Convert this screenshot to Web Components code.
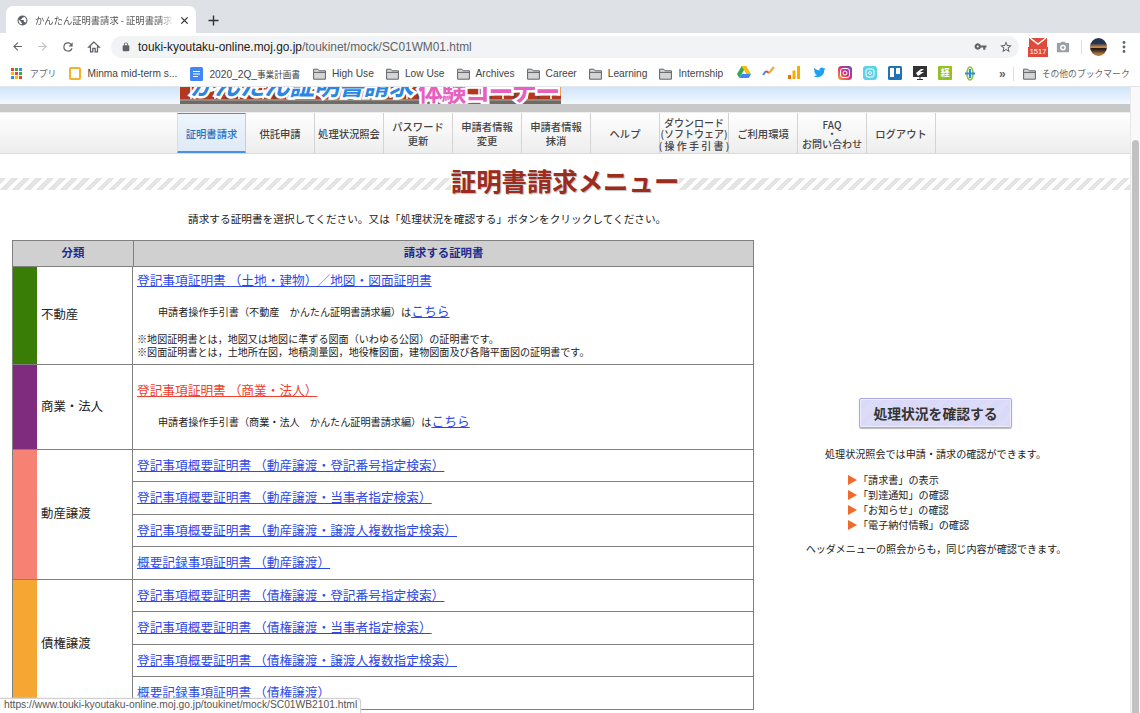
<!DOCTYPE html>
<html lang="ja">
<head>
<meta charset="utf-8">
<title>かんたん証明書請求 - 証明書請求メニュー</title>
<style>
html, body { margin: 0; height: 713px; overflow: hidden; background: #fff; }
body { position: relative; width: 1140px; font-family: "Noto Sans CJK JP", "Liberation Sans", sans-serif; color: #222; }
#view { display: flex; height: 626px; }
#page { width: 1130px; overflow: hidden; }
</style>
</head>
<body>
<browser-chrome></browser-chrome>
<div id="view">
  <div id="page">
    <site-banner></site-banner>
    <site-nav>
      <nav-item active>証明書請求</nav-item>
      <nav-item>供託申請</nav-item>
      <nav-item>処理状況照会</nav-item>
      <nav-item>パスワード<br>更新</nav-item>
      <nav-item>申請者情報<br>変更</nav-item>
      <nav-item>申請者情報<br>抹消</nav-item>
      <nav-item>ヘルプ</nav-item>
      <nav-item tight>ダウンロード<br>(ソフトウェア)<br>( 操 作 手 引 書 )</nav-item>
      <nav-item>ご利用環境</nav-item>
      <nav-item faq>FAQ<br>・<br>お問い合わせ</nav-item>
      <nav-item>ログアウト</nav-item>
    </site-nav>
    <page-title>証明書請求メニュー</page-title>
    <intro-text>請求する証明書を選択してください。又は「処理状況を確認する」ボタンをクリックしてください。</intro-text>
    <menu-layout>
      <cert-table>
        <cert-group color="#3a7d06" label="不動産" height="98">
          <cert-row height="98">
            <cert-link big>登記事項証明書 （土地・建物）／地図・図面証明書</cert-link>
            <guide-line>申請者操作手引書（不動産　かんたん証明書請求編）は</guide-line>
            <cert-note>※地図証明書とは，地図又は地図に準ずる図面（いわゆる公図）の証明書です。<br>※図面証明書とは，土地所在図，地積測量図，地役権図面，建物図面及び各階平面図の証明書です。</cert-note>
          </cert-row>
        </cert-group>
        <cert-group color="#7f2c7f" label="商業・法人" height="85">
          <cert-row height="85" pad="15">
            <cert-link red>登記事項証明書 （商業・法人）</cert-link>
            <guide-line wide>申請者操作手引書（商業・法人　かんたん証明書請求編）は</guide-line>
          </cert-row>
        </cert-group>
        <cert-group color="#f58272" label="動産譲渡" height="130">
          <cert-row><cert-link>登記事項概要証明書 （動産譲渡・登記番号指定検索）</cert-link></cert-row>
          <cert-row><cert-link>登記事項概要証明書 （動産譲渡・当事者指定検索）</cert-link></cert-row>
          <cert-row><cert-link>登記事項概要証明書 （動産譲渡・譲渡人複数指定検索）</cert-link></cert-row>
          <cert-row><cert-link>概要記録事項証明書 （動産譲渡）</cert-link></cert-row>
        </cert-group>
        <cert-group color="#f6a632" label="債権譲渡" height="130">
          <cert-row><cert-link>登記事項概要証明書 （債権譲渡・登記番号指定検索）</cert-link></cert-row>
          <cert-row><cert-link>登記事項概要証明書 （債権譲渡・当事者指定検索）</cert-link></cert-row>
          <cert-row><cert-link>登記事項概要証明書 （債権譲渡・譲渡人複数指定検索）</cert-link></cert-row>
          <cert-row><cert-link>概要記録事項証明書 （債権譲渡）</cert-link></cert-row>
        </cert-group>
      </cert-table>
      <status-panel></status-panel>
    </menu-layout>
  </div>
  <page-scrollbar></page-scrollbar>
</div>
<status-bubble>https://www.touki-kyoutaku-online.moj.go.jp/toukinet/mock/SC01WB2101.html</status-bubble>

<script>
// small helper, every element has open shadow root with own style
function shadow(el, html) {
    const template = document.createElement("template")
    template.innerHTML = html
    el.attachShadow({ mode: "open" }).appendChild(template.content.cloneNode(true))
}

const FOLDER = `<svg width="13" height="12" viewBox="0 0 13 12"><path d="M.6 1.2h4.2l1.3 1.6h6.3v8.4H.6z" fill="#d5d5d5" stroke="#5f6368" stroke-width="1"/><path d="M.6 4.4h11.8" stroke="#5f6368" stroke-width="1"/></svg>`

class BrowserChrome extends HTMLElement {
    constructor() {
        super()
        const folder = name => `<span class="bm f"><span class="ic">${FOLDER}</span>${name}</span>`
        shadow(this, `
        <style>
        :host { display: block; height: 87px; font-family: "Liberation Sans", "Noto Sans CJK JP", sans-serif; background: #fff; }
        .tabs { height: 33px; background: #dee1e6; display: flex; align-items: flex-end; padding-left: 6px; box-sizing: border-box; }
        .tab { width: 190px; height: 27px; background: #fff; border-radius: 7px 7px 0 0; display: flex; align-items: center; padding: 1px 7px 0 11px; box-sizing: border-box; color: #555; font-size: 9.3px; gap: 7px; }
        .tab .t { flex: 1; overflow: hidden; white-space: nowrap; -webkit-mask-image: linear-gradient(90deg,#000 90%,transparent); mask-image: linear-gradient(90deg,#000 90%,transparent); font-family: "Noto Sans CJK JP", sans-serif; }
        .plus { margin: 0 0 2px 12px; height: 21px; display: flex; align-items: center; }
        .tool { height: 27px; display: flex; align-items: center; padding-left: 4px; box-sizing: border-box; }
        .nav { width: 26px; display: flex; justify-content: center; margin-right: -.5px; }
        .omni { margin-left: 5px; width: 908px; height: 22px; border-radius: 11px; background: #f1f3f4; display: flex; align-items: center; padding: 0 6px 0 10px; box-sizing: border-box; font-size: 11.9px; color: #5f6368; }
        .omni b { font-weight: 400; color: #222; }
        .url { flex: 1; margin-left: 7px; white-space: nowrap; }
        .omni svg + svg { margin-left: 12px; }
        .right { display: flex; align-items: center; margin-left: 9px; }
        .sep { width: 1px; height: 14px; background: #dadce0; margin: 0 8px 0 11px; }
        .avatar { width: 17px; height: 18px; border-radius: 50%; background: linear-gradient(#27344e 0 30%, #7d6a58 42%, #e8963a 52%, #2a1a12 58%, #3a2a22 68%, #b0753c 88%); }
        .mail { position: relative; width: 20px; height: 20px; }
        .mail span { position: absolute; left: 0; bottom: 0; width: 20px; height: 10px; background: #e04a3c; color: #fff; font-size: 7.5px; line-height: 10px; text-align: center; }
        .bars { height: 27px; display: flex; align-items: center; padding-left: 11px; font-size: 10.2px; color: #444; white-space: nowrap; box-shadow: inset 0 -1px 0 #e4e6ea; box-sizing: border-box; }
        .bm { display: flex; align-items: center; margin-right: 13px; }
        .bm.f { margin-right: 12px; }
        .ic { display: flex; margin-right: 6px; }
        .cjk { font-family: "Noto Sans CJK JP", sans-serif; font-size: 8.8px; color: #666; }
        .ja { font-family: "Noto Sans CJK JP", sans-serif; font-size: 8.6px; }
        .fav { display: flex; width: 25.2px; justify-content: center; }
        .favs { display: flex; margin-left: 8px; }
        .more { margin-left: 16px; font-size: 12px; color: #666; font-weight: 700; }
        .vsep { width: 1px; height: 14px; background: #dadce0; margin: 0 9px 0 7px; }
        </style>
        <div class="tabs">
          <div class="tab">
            <svg width="11" height="11" viewBox="0 0 24 24"><path fill="#5f6368" d="M12 1a11 11 0 1 0 0 22 11 11 0 0 0 0-22zM3.5 12c0-.8.1-1.5.3-2.2L9 15v1c0 1.1.9 2 2 2v2.4A8.5 8.5 0 0 1 3.5 12zm14.6 4.7c-.3-.8-1-1.7-2.1-1.7h-1v-3c0-.6-.4-1-1-1H8v-2h2c.6 0 1-.4 1-1V6h2c1.1 0 2-.9 2-2 3.2 1.2 5.5 4.4 5.5 8 0 1.8-1 3.6-2.4 4.7z"/></svg>
            <span class="t">かんたん証明書請求 - 証明書請求メニュー</span>
            <svg width="9" height="9" viewBox="0 0 10 10"><path d="M1.5 1.5l7 7m0-7l-7 7" stroke="#333" stroke-width="1.4"/></svg>
          </div>
          <div class="plus"><svg width="11" height="11" viewBox="0 0 11 11"><path d="M5.5 .5v10M.5 5.5h10" stroke="#333" stroke-width="1.4"/></svg></div>
        </div>
        <div class="tool">
          <span class="nav"><svg width="13" height="13" viewBox="0 0 24 24"><path fill="#5f6368" d="M20 11H7.83l5.59-5.59L12 4l-8 8 8 8 1.41-1.41L7.83 13H20z"/></svg></span>
          <span class="nav"><svg width="13" height="13" viewBox="0 0 24 24"><path fill="#bdc1c6" d="M4 11h12.17l-5.59-5.59L12 4l8 8-8 8-1.41-1.41L16.17 13H4z"/></svg></span>
          <span class="nav"><svg width="14" height="14" viewBox="0 0 24 24"><path fill="#5f6368" d="M17.65 6.35A7.96 7.96 0 0 0 12 4a8 8 0 1 0 7.73 10h-2.08A6 6 0 1 1 12 6c1.66 0 3.14.69 4.22 1.78L13 11h7V4z"/></svg></span>
          <span class="nav"><svg width="14" height="14" viewBox="0 0 24 24"><path fill="none" stroke="#5f6368" stroke-width="2.2" d="M12 3.5L3 12h3v8.5h4v-6h4v6h4V12h3z"/></svg></span>
          <div class="omni">
            <svg width="10" height="10" viewBox="0 0 24 24"><path fill="#5f6368" d="M18 8h-1V6a5 5 0 0 0-10 0v2H6a2 2 0 0 0-2 2v10a2 2 0 0 0 2 2h12a2 2 0 0 0 2-2V10a2 2 0 0 0-2-2zM9 6a3 3 0 0 1 6 0v2H9z"/></svg>
            <span class="url"><b>touki-kyoutaku-online.moj.go.jp</b>/toukinet/mock/SC01WM01.html</span>
            <svg width="13" height="13" viewBox="0 0 24 24"><path fill="#5f6368" d="M12.65 10A6 6 0 1 0 12.65 14H17v4h4v-4h2v-4zM7 14a2 2 0 1 1 0-4 2 2 0 0 1 0 4z"/></svg>
            <svg width="14" height="14" viewBox="0 0 24 24"><path fill="#5f6368" d="M22 9.24l-7.19-.62L12 2 9.19 8.63 2 9.24l5.46 4.73L5.82 21 12 17.27 18.18 21l-1.63-7.03zM12 15.4l-3.76 2.27 1-4.28-3.32-2.88 4.38-.38L12 6.1l1.71 4.04 4.38.38-3.32 2.88 1 4.28z"/></svg>
          </div>
          <div class="right">
            <div class="mail">
              <svg width="20" height="11" viewBox="0 0 20 11" style="position:absolute;left:0;top:0"><path fill="#e04a3c" d="M1 1h18v9H1z"/><path fill="none" stroke="#fff" stroke-width="1.5" d="M2 1l8 6 8-6"/></svg>
              <span>1517</span>
            </div>
            <svg style="margin-left:8px" width="14" height="14" viewBox="0 0 24 24"><path fill="#9aa0a6" d="M9 3L7.2 5H3a1.5 1.5 0 0 0-1.5 1.5v13A1.5 1.5 0 0 0 3 21h18a1.5 1.5 0 0 0 1.5-1.5v-13A1.5 1.5 0 0 0 21 5h-4.2L15 3zm3 15a5 5 0 1 1 0-10 5 5 0 0 1 0 10zm0-2.5a2.5 2.5 0 1 0 0-5 2.5 2.5 0 0 0 0 5z"/></svg>
            <span class="sep"></span>
            <span class="avatar"></span>
            <svg style="margin-left:15px" width="4" height="14" viewBox="0 0 4 14"><circle cx="2" cy="2.5" r="1.4" fill="#5f6368"/><circle cx="2" cy="7" r="1.4" fill="#5f6368"/><circle cx="2" cy="11.5" r="1.4" fill="#5f6368"/></svg>
          </div>
        </div>
        <div class="bars">
          <span class="bm"><span class="ic" style="margin-right:8px"><svg width="11" height="11" viewBox="0 0 11 11"><rect x="0" y="0" width="3" height="3" fill="#ea4335"/><rect x="4" y="0" width="3" height="3" fill="#34a853"/><rect x="8" y="0" width="3" height="3" fill="#4285f4"/><rect x="0" y="4" width="3" height="3" fill="#fbbc05"/><rect x="4" y="4" width="3" height="3" fill="#ea4335"/><rect x="8" y="4" width="3" height="3" fill="#34a853"/><rect x="0" y="8" width="3" height="3" fill="#4285f4"/><rect x="4" y="8" width="3" height="3" fill="#fbbc05"/><rect x="8" y="8" width="3" height="3" fill="#ea4335"/></svg></span><span class="cjk">アプリ</span></span>
          <span class="bm"><span class="ic"><svg width="12" height="13" viewBox="0 0 12 13"><rect x="1" y="1" width="10" height="11" rx="1" fill="#fff" stroke="#f6b02c" stroke-width="2"/></svg></span>Minma mid-term s...</span>
          <span class="bm"><span class="ic"><svg width="13" height="14" viewBox="0 0 13 14"><rect x="0" y="0" width="13" height="14" rx="1.5" fill="#4285f4"/><path d="M3 4.5h7M3 7h7M3 9.5h5" stroke="#fff" stroke-width="1"/></svg></span><span>2020_2Q_<span class="ja">事業計画書</span></span></span>
          ${folder("High Use")}${folder("Low Use")}${folder("Archives")}${folder("Career")}${folder("Learning")}
          <span class="bm" style="margin-right:0"><span class="ic">${FOLDER}</span>Internship</span>
          <span class="favs">
            <span class="fav"><svg width="14" height="12" viewBox="0 0 14 12"><path fill="#fbbc05" d="M4.7 0h4.6l4.7 8H9.3z"/><path fill="#34a853" d="M4.7 0L0 8l2.3 4 4.7-8z"/><path fill="#4285f4" d="M4.7 8H14l-2.3 4H2.3z"/></svg></span>
            <span class="fav"><svg width="13" height="10" viewBox="0 0 13 10"><path fill="none" stroke="#4285f4" stroke-width="2" d="M1 9l3-4"/><path fill="none" stroke="#ea4335" stroke-width="2" d="M4 5l3 2"/><path fill="none" stroke="#f6a632" stroke-width="2" d="M7 7l5-6"/></svg></span>
            <span class="fav"><svg width="12" height="13" viewBox="0 0 12 13"><rect x="0" y="9" width="3" height="4" fill="#e8710a"/><rect x="4.5" y="4.5" width="3" height="8.5" fill="#f9ab00"/><rect x="9" y="0" width="3" height="13" fill="#f9ab00"/></svg></span>
            <span class="fav"><svg width="13" height="13" viewBox="0 0 24 24"><path fill="#1da1f2" d="M23 4.9c-.8.4-1.7.6-2.6.7.9-.6 1.6-1.4 2-2.5-.9.5-1.9.9-2.9 1.1A4.5 4.5 0 0 0 11.8 8.3 12.8 12.8 0 0 1 2.5 3.6a4.5 4.5 0 0 0 1.4 6c-.7 0-1.4-.2-2-.6 0 2.2 1.5 4 3.6 4.5-.7.2-1.4.2-2 .1.6 1.8 2.2 3.1 4.2 3.1A9 9 0 0 1 1 18.6 12.8 12.8 0 0 0 20.7 7.2c.9-.6 1.7-1.4 2.3-2.3z"/></svg></span>
            <span class="fav"><svg width="14" height="14" viewBox="0 0 14 14"><defs><linearGradient id="ig" x1="0" y1="1" x2="1" y2="0"><stop offset="0" stop-color="#f9a825"/><stop offset=".5" stop-color="#d6307c"/><stop offset="1" stop-color="#5b4fd0"/></linearGradient></defs><rect width="14" height="14" rx="3.5" fill="url(#ig)"/><rect x="2.5" y="2.5" width="9" height="9" rx="2.5" fill="none" stroke="#fff"/><circle cx="7" cy="7" r="2" fill="none" stroke="#fff"/></svg></span>
            <span class="fav"><svg width="14" height="14" viewBox="0 0 14 14"><rect width="14" height="14" rx="3" fill="#5ad3e6"/><rect x="3" y="3" width="8" height="8" rx="2" fill="none" stroke="#fff"/><circle cx="7" cy="7" r="1.5" fill="none" stroke="#fff"/></svg></span>
            <span class="fav"><svg width="14" height="14" viewBox="0 0 14 14"><rect width="14" height="14" rx="1.5" fill="#1f74b8"/><rect x="2" y="2" width="4" height="9" fill="#fff"/><rect x="8" y="2" width="4" height="6" fill="#fff"/></svg></span>
            <span class="fav"><svg width="14" height="14" viewBox="0 0 14 14"><rect width="14" height="11" fill="#333"/><path d="M4 13.5h6M7 11v2.5" stroke="#333"/><path d="M3 7l5-4h3L7 6h4L5 10z" fill="#fff"/></svg></span>
            <span class="fav" style="position:relative"><svg width="14" height="14" viewBox="0 0 14 14"><rect width="14" height="14" rx="1" fill="#94c11f"/></svg><span style="position:absolute;left:0;right:0;top:1px;text-align:center;color:#fff;font:700 9px/12px 'Noto Sans CJK JP',sans-serif">経</span></span>
            <span class="fav"><svg width="12" height="15" viewBox="0 0 12 15"><ellipse cx="6" cy="7.5" rx="3" ry="6.5" fill="none" stroke="#8cc63f" stroke-width="1.6"/><path d="M6 3v9" stroke="#2b8de0" stroke-width="2"/><path d="M1 7.5h10" stroke="#2b8de0" stroke-width="2"/></svg></span>
          </span>
          <span class="more">»</span>
          <span class="vsep"></span>
          <span class="bm" style="margin:0"><span class="ic">${FOLDER}</span><span class="cjk">その他のブックマーク</span></span>
        </div>`)
    }
}
customElements.define("browser-chrome", BrowserChrome)

class SiteBanner extends HTMLElement {
    constructor() {
        super()
        shadow(this, `
        <style>
        :host { display: block; height: 26px; background: linear-gradient(#cfe4fb 0, #f2f8ff 17px, #c8c8c8 17px, #c8c8c8 25px, #eee 25px); }
        .art { margin-left: 180px; width: 381px; height: 17px; overflow: hidden; position: relative; display: flex; white-space: nowrap; font: 700 25px/30px "Noto Sans CJK JP", sans-serif;
            background:
              linear-gradient(transparent 12px, #8f8b84 12px 14px, #6e6a64 14px),
              repeating-linear-gradient(90deg, #b4371f 0 10px, #d9d4ca 10px 12px, #b4371f 12px 21px, #5b4a44 21px 24px); }
        .art span { paint-order: stroke; -webkit-text-stroke: 5px #fff; height: 30px; }
        .a { margin: -18px 0 0 10px; color: #2c85df; letter-spacing: -.2px; font-style: italic; }
        .b { margin: -12px 0 0 5px; color: #e85fc0; letter-spacing: -1.6px; }
        </style>
        <div class="art"><span class="a">かんたん証明書請求</span><span class="b">体験コーナー</span></div>`)
    }
}
customElements.define("site-banner", SiteBanner)

class SiteNav extends HTMLElement {
    constructor() {
        super()
        shadow(this, `
        <style>
        :host { display: flex; height: 40px; padding-left: 177px; background: linear-gradient(#fff, #ededed); border-bottom: 1px solid #dcdcdc; }
        </style>
        <slot></slot>`)
    }
}
customElements.define("site-nav", SiteNav)

class NavItem extends HTMLElement {
    constructor() {
        super()
        shadow(this, `
        <style>
        :host { display: flex; width: 69px; height: 40px; box-sizing: border-box; padding-top: 2px; align-items: center; justify-content: center; text-align: center; font-size: 10.3px; line-height: 14px; font-weight: 500; color: #444; white-space: nowrap; border-right: 1px solid #d4d4d4; }
        :host([tight]) { line-height: 11.5px; font-size: 10px; }
        :host([faq]) { line-height: 9.5px; font-size: 10px; }
        :host([active]) { color: #2a70c0; background: linear-gradient(#eef5fc, #dfeaf6); border-top: 1px solid #4a90e0; border-bottom: 2px solid #4a90e0; border-right-color: #ccc; border-left: 1px solid #ddd; }
        </style>
        <span><slot></slot></span>`)
    }
}
customElements.define("nav-item", NavItem)

class PageTitle extends HTMLElement {
    constructor() {
        super()
        shadow(this, `
        <style>
        :host { display: flex; justify-content: center; margin-top: 10px; height: 32px; align-items: center; }
        .band { flex: 1; height: 12px; margin-top: 8px; background: repeating-linear-gradient(-45deg, #e4e4e4 0 4.5px, #fff 4.5px 8.5px); }
        h1 { margin: 0; font-size: 25.4px; line-height: 32px; font-weight: 700; color: #9c2b20; white-space: nowrap; text-shadow: 1px 1px 1px #bbb; background: #fff; }
        </style>
        <div class="band"></div><h1><slot></slot></h1><div class="band"></div>`)
    }
}
customElements.define("page-title", PageTitle)

class IntroText extends HTMLElement {
    constructor() {
        super()
        shadow(this, `
        <style>
        :host { display: block; padding-left: 188px; height: 44px; box-sizing: border-box; padding-top: 15px; font-size: 10.67px; line-height: 16px; color: #222; white-space: nowrap; }
        </style>
        <slot></slot>`)
    }
}
customElements.define("intro-text", IntroText)

class MenuLayout extends HTMLElement {
    constructor() {
        super()
        shadow(this, `
        <style>
        :host { display: flex; padding-left: 12px; }
        </style>
        <slot></slot>`)
    }
}
customElements.define("menu-layout", MenuLayout)

class CertTable extends HTMLElement {
    constructor() {
        super()
        shadow(this, `
        <style>
        :host { display: block; width: 742px; flex: none; border: 1px solid #808080; border-bottom: none; box-sizing: border-box; }
        .head { display: flex; height: 25px; background: #d0d0d0; border-bottom: 1px solid #808080; font-size: 11.4px; font-weight: 700; color: #1d2c8f; text-align: center; line-height: 23px; }
        .a { width: 120px; border-right: 1px solid #808080; }
        .b { flex: 1; }
        </style>
        <div class="head"><div class="a">分類</div><div class="b">請求する証明書</div></div>
        <slot></slot>`)
    }
}
customElements.define("cert-table", CertTable)

class CertGroup extends HTMLElement {
    constructor() {
        super()
        shadow(this, `
        <style>
        :host { display: flex; box-sizing: border-box; border-bottom: 1px solid #808080; }
        .color { width: 24px; }
        .label { width: 96px; padding: 0 0 3px 4px; box-sizing: border-box; display: flex; align-items: center; font-size: 12.4px; color: #222; border-right: 1px solid #808080; }
        .rows { flex: 1; }
        </style>
        <div class="color"></div><div class="label"></div><div class="rows"><slot></slot></div>`)
        this.shadowRoot.querySelector(".color").style.background = this.getAttribute("color")
        this.shadowRoot.querySelector(".label").textContent = this.getAttribute("label")
        this.style.height = this.getAttribute("height") + "px"
    }
}
customElements.define("cert-group", CertGroup)

class CertRow extends HTMLElement {
    constructor() {
        super()
        shadow(this, `
        <style>
        :host { display: block; box-sizing: border-box; height: 32.25px; padding: 0 4px; border-bottom: 1px solid #808080; }
        :host(:last-child) { border-bottom: none; }
        </style>
        <slot></slot>`)
        const h = this.getAttribute("height")
        if (h) this.style.height = h + "px"
        const pad = this.getAttribute("pad")
        if (pad) this.style.paddingTop = pad + "px"
    }
}
customElements.define("cert-row", CertRow)

class CertLink extends HTMLElement {
    constructor() {
        super()
        shadow(this, `
        <style>
        :host { display: block; font-size: 12.7px; line-height: 29px; white-space: nowrap; }
        :host([big]) { line-height: 26px; }
        a { color: #2f49e8; text-decoration: underline; }
        :host([red]) a { color: #f0402e; }
        :host([red]) { line-height: 20px; }
        </style>
        <a href="#"><slot></slot></a>`)
    }
}
customElements.define("cert-link", CertLink)

class GuideLine extends HTMLElement {
    constructor() {
        super()
        shadow(this, `
        <style>
        :host { display: block; padding-left: 21px; margin-top: 8px; font-size: 10.13px; line-height: 20px; white-space: nowrap; color: #222; }
        :host([wide]) { margin-top: 11px; }
        a { font-size: 12.8px; color: #2f49e8; }
        </style>
        <slot></slot><a href="#">こちら</a>`)
    }
}
customElements.define("guide-line", GuideLine)

class CertNote extends HTMLElement {
    constructor() {
        super()
        shadow(this, `
        <style>
        :host { display: block; margin-top: 10px; font-size: 10.08px; line-height: 13px; white-space: nowrap; color: #222; }
        </style>
        <slot></slot>`)
    }
}
customElements.define("cert-note", CertNote)

class StatusPanel extends HTMLElement {
    constructor() {
        super()
        const item = t => `<li>${t}</li>`
        shadow(this, `
        <style>
        :host { display: flex; flex-direction: column; align-items: center; width: 360px; flex: none; padding-top: 158px; box-sizing: border-box; font-size: 10.1px; color: #222; }
        button { width: 153px; height: 30px; margin-left: 3px; border: 1px solid #a8a8e6; border-radius: 2px; font: 700 13.8px "Noto Sans CJK JP", sans-serif; color: #333; padding: 0; background: repeating-linear-gradient(-45deg, #d8d8f6 0 1px, #dedefa 1px 2px); box-shadow: 0 1px 1px #bbb, inset 0 0 0 1px #ecebff; }
        p { margin: 0; white-space: nowrap; line-height: 16px; }
        .top { margin: 18px 0 0 3px; }
        ul { margin: 10px 0 0 94px; padding: 0; list-style: none; align-self: flex-start; line-height: 15px; }
        li { display: flex; align-items: center; white-space: nowrap; }
        li::before { content: ""; width: 0; height: 0; border-left: 9px solid #ef6a2c; border-top: 5px solid transparent; border-bottom: 5px solid transparent; margin-right: 1px; }
        .bottom { margin: 9px 0 0 4px; }
        </style>
        <button>処理状況を確認する</button>
        <p class="top">処理状況照会では申請・請求の確認ができます。</p>
        <ul>${item("「請求書」の表示")}${item("「到達通知」の確認")}${item("「お知らせ」の確認")}${item("「電子納付情報」の確認")}</ul>
        <p class="bottom">ヘッダメニューの照会からも，同じ内容が確認できます。</p>`)
    }
}
customElements.define("status-panel", StatusPanel)

class PageScrollbar extends HTMLElement {
    constructor() {
        super()
        shadow(this, `
        <style>
        :host { display: block; width: 10px; box-sizing: border-box; background: #f9f9f9; border-left: 1px solid #e8e8e8; padding: 53px 1px 0 1px; }
        div { height: 100%; background: #c1c1c1; border-radius: 4px 4px 0 0; }
        </style>
        <div></div>`)
    }
}
customElements.define("page-scrollbar", PageScrollbar)

class StatusBubble extends HTMLElement {
    constructor() {
        super()
        shadow(this, `
        <style>
        :host { position: absolute; left: 0; bottom: 0; height: 15px; width: 361px; box-sizing: border-box; background: #fff; border: 1px solid #d0d0d0; border-left: none; border-bottom: none; border-radius: 0 4px 0 0; padding-left: 4px; font: 10.28px/12px "Liberation Sans", sans-serif; color: #555; white-space: nowrap; box-shadow: 0 0 2px #ddd; }
        </style>
        <slot></slot>`)
    }
}
customElements.define("status-bubble", StatusBubble)
</script>
</body>
</html>
